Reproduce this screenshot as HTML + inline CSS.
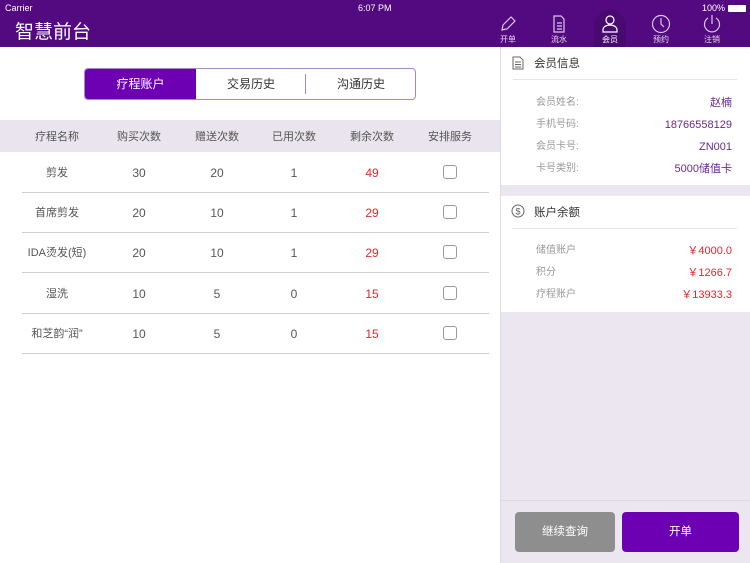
<!DOCTYPE html>
<html><head><meta charset="utf-8"><style>
*{margin:0;padding:0;box-sizing:border-box}
body{width:750px;height:563px;overflow:hidden;background:#fff;font-family:"Liberation Sans","Noto Sans CJK SC",sans-serif;position:relative}
.hdr{position:absolute;left:0;top:0;width:750px;height:47px;background:#530a80}
.sb{position:absolute;top:3px;font-size:9px;color:#fff}
.title{position:absolute;left:15px;top:20px;font-size:19px;line-height:26px;color:#fff}
.nav{position:absolute;top:14px;width:40px;text-align:center;color:#e6d8f0;font-size:8px;line-height:10px}
.nav svg{display:block;margin:0 auto 1px}
.act{position:absolute;left:594px;top:10px;width:32px;height:37px;border-radius:16px 16px 0 0;background:#480a70}
.tabs{position:absolute;left:84px;top:68px;width:332px;height:32px;border:1px solid #a58bbd;border-radius:4px;overflow:hidden;font-size:12px}
.tabs div{position:absolute;top:0;height:30px;line-height:30px;text-align:center;color:#333}
.th{position:absolute;left:0;top:120px;width:500px;height:32px;background:#e9e4ee}
.c{position:absolute;width:80px;text-align:center;font-size:11px;line-height:14px;height:14px;color:#555}
.line{position:absolute;left:22px;width:467px;height:1px;background:#cfcfcf}
.cb{position:absolute;left:443px;width:14px;height:14px;border:1px solid #999;border-radius:3px}
.rp{position:absolute;left:500px;top:47px;width:250px;height:516px;background:#ebe6f0;border-left:1px solid #ddd}
.card{position:absolute;left:0;width:250px;background:#fff}
.lab{position:absolute;left:35px;font-size:10px;line-height:14px;color:#999}
.val{position:absolute;right:19px;font-size:11px;line-height:14px;color:#6a2a8c}
.red{color:#e8252d}
.btn{position:absolute;top:512px;height:40px;line-height:40px;text-align:center;color:#fff;font-size:11.5px;border-radius:4px}
</style></head><body>
<div class="hdr">
<div class="sb" style="left:5px">Carrier</div>
<div class="sb" style="left:358px">6:07 PM</div>
<div class="sb" style="left:702px">100% <span style="display:inline-block;width:18px;height:7px;background:#fff;vertical-align:-1px;border-radius:1px"></span></div>
<div class="title">智慧前台</div>
<div class="act"></div>
<div class="nav" style="left:488px"><svg width="20" height="20" viewBox="0 0 20 20" fill="none" stroke="#d8c8e6" stroke-width="1.2"><path d="M4 16l1-5 8-8 4 4-8 8z M13 3l4 4 M4 16l4-1"/></svg>开单</div>
<div class="nav" style="left:539px"><svg width="20" height="20" viewBox="0 0 20 20" fill="none" stroke="#d8c8e6" stroke-width="1.2"><path d="M5 2h7l3 3v13H5z M8 9h5 M8 12h5 M8 15h5"/></svg>流水</div>
<div class="nav" style="left:590px;color:#fff"><svg width="20" height="20" viewBox="0 0 20 20" fill="none" stroke="#fff" stroke-width="1.2"><circle cx="10" cy="6" r="4"/><path d="M3 18v-2c0-3 3-5 7-5s7 2 7 5v2z"/></svg>会员</div>
<div class="nav" style="left:641px"><svg width="20" height="20" viewBox="0 0 20 20" fill="none" stroke="#d8c8e6" stroke-width="1.2"><circle cx="10" cy="10" r="8.5"/><path d="M10 4v6l3 3"/></svg>预约</div>
<div class="nav" style="left:692px"><svg width="20" height="20" viewBox="0 0 20 20" fill="none" stroke="#d8c8e6" stroke-width="1.2"><path d="M10 1v9 M6 4a7.5 7.5 0 1 0 8 0"/></svg>注销</div>
</div>

<div class="tabs">
<div style="left:0;width:111px;background:#6e00b4;color:#fff">疗程账户</div>
<div style="left:111px;width:110px">交易历史</div>
<div style="left:220px;top:5px;width:1px;height:20px;background:#a58bbd"></div>
<div style="left:221px;width:110px">沟通历史</div>
</div>

<div class="th"></div>
<div class="c" style="left:17px;top:130px">疗程名称</div>
<div class="c" style="left:99px;top:130px">购买次数</div>
<div class="c" style="left:177px;top:130px">赠送次数</div>
<div class="c" style="left:254px;top:130px">已用次数</div>
<div class="c" style="left:332px;top:130px">剩余次数</div>
<div class="c" style="left:410px;top:130px">安排服务</div>

<div class="c" style="left:17px;top:166px">剪发</div><div class="c" style="left:99px;top:166px;font-size:12px">30</div><div class="c" style="left:177px;top:166px;font-size:12px">20</div><div class="c" style="left:254px;top:166px;font-size:12px">1</div><div class="c red" style="left:332px;top:166px;font-size:12px">49</div><div class="cb" style="top:165px"></div><div class="line" style="top:192px"></div>
<div class="c" style="left:17px;top:206px">首席剪发</div><div class="c" style="left:99px;top:206px;font-size:12px">20</div><div class="c" style="left:177px;top:206px;font-size:12px">10</div><div class="c" style="left:254px;top:206px;font-size:12px">1</div><div class="c red" style="left:332px;top:206px;font-size:12px">29</div><div class="cb" style="top:205px"></div><div class="line" style="top:232px"></div>
<div class="c" style="left:17px;top:246px">IDA烫发(短)</div><div class="c" style="left:99px;top:246px;font-size:12px">20</div><div class="c" style="left:177px;top:246px;font-size:12px">10</div><div class="c" style="left:254px;top:246px;font-size:12px">1</div><div class="c red" style="left:332px;top:246px;font-size:12px">29</div><div class="cb" style="top:245px"></div><div class="line" style="top:272px"></div>
<div class="c" style="left:17px;top:287px">湿洗</div><div class="c" style="left:99px;top:287px;font-size:12px">10</div><div class="c" style="left:177px;top:287px;font-size:12px">5</div><div class="c" style="left:254px;top:287px;font-size:12px">0</div><div class="c red" style="left:332px;top:287px;font-size:12px">15</div><div class="cb" style="top:286px"></div><div class="line" style="top:313px"></div>
<div class="c" style="left:17px;top:327px">和芝韵“润”</div><div class="c" style="left:99px;top:327px;font-size:12px">10</div><div class="c" style="left:177px;top:327px;font-size:12px">5</div><div class="c" style="left:254px;top:327px;font-size:12px">0</div><div class="c red" style="left:332px;top:327px;font-size:12px">15</div><div class="cb" style="top:326px"></div><div class="line" style="top:353px"></div>

<div class="rp">
<div class="card" style="top:0;height:138px">
<svg style="position:absolute;left:11px;top:9px" width="12" height="14" viewBox="0 0 12 14" fill="none" stroke="#666" stroke-width="1"><path d="M1 1h7l3 3v9H1z M3 6h6 M3 8.5h6 M3 11h6"/></svg>
<div style="position:absolute;left:33px;top:10px;font-size:11.5px;line-height:15px;color:#333">会员信息</div>
<div style="position:absolute;left:12px;top:32px;width:224px;height:1px;background:#e4e4e4"></div>
<div class="lab" style="top:49px">会员姓名:</div><div class="val" style="top:49px">赵楠</div>
<div class="lab" style="top:71px">手机号码:</div><div class="val" style="top:71px">18766558129</div>
<div class="lab" style="top:93px">会员卡号:</div><div class="val" style="top:93px">ZN001</div>
<div class="lab" style="top:115px">卡号类别:</div><div class="val" style="top:115px">5000储值卡</div>
</div>
<div class="card" style="top:149px;height:116px">
<svg style="position:absolute;left:10px;top:8px" width="14" height="14" viewBox="0 0 14 14"><circle cx="7" cy="7" r="6" fill="none" stroke="#666"/><text x="7" y="10.5" font-size="9" text-anchor="middle" fill="#666" font-family="Liberation Sans">$</text></svg>
<div style="position:absolute;left:33px;top:10px;font-size:11.5px;line-height:15px;color:#333">账户余额</div>
<div style="position:absolute;left:12px;top:32px;width:224px;height:1px;background:#e4e4e4"></div>
<div class="lab" style="top:48px">储值账户</div><div class="val red" style="top:48px">￥4000.0</div>
<div class="lab" style="top:70px">积分</div><div class="val red" style="top:70px">￥1266.7</div>
<div class="lab" style="top:92px">疗程账户</div><div class="val red" style="top:92px">￥13933.3</div>
</div>
<div style="position:absolute;left:0;top:453px;width:250px;height:1px;background:#ddd"></div>
</div>
<div class="btn" style="left:515px;width:100px;background:#8e8e8e">继续查询</div>
<div class="btn" style="left:622px;width:117px;background:#6e00b4">开单</div>
</body></html>
